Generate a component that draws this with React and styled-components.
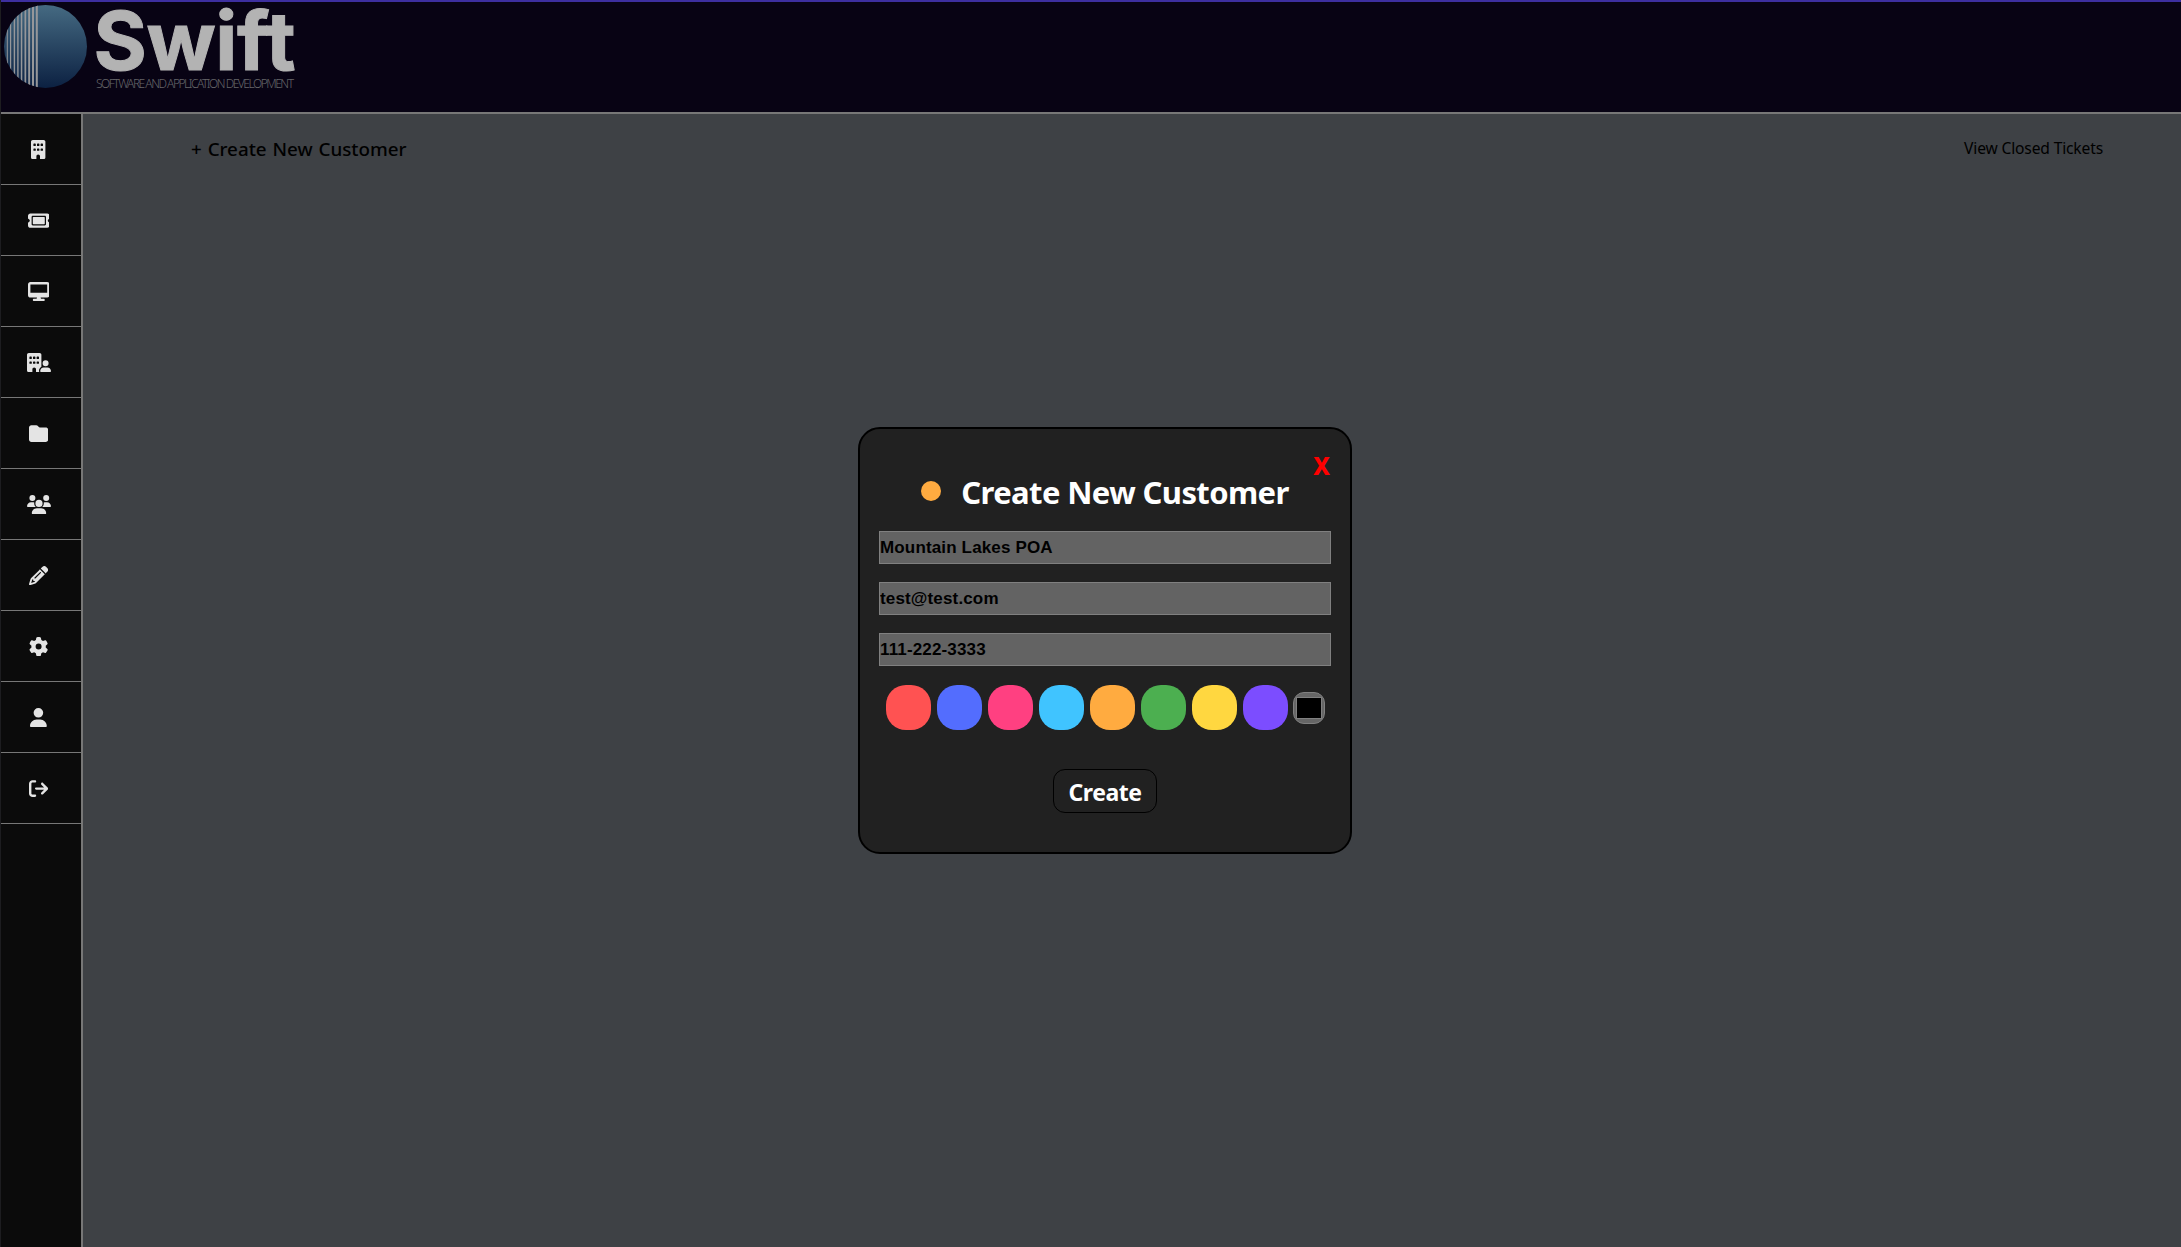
import React, { useState } from "react";
import styled, { createGlobalStyle } from "styled-components";
import {
  FaBuilding, FaTicket, FaDesktop, FaBuildingUser, FaFolder,
  FaUsers, FaPencil, FaGear, FaUser, FaArrowRightFromBracket,
} from "react-icons/fa6";

const GlobalStyle = createGlobalStyle`
  * { box-sizing: border-box; }
  body { margin: 0; background: #3e4145; font-family: "Noto Sans", "Open Sans", sans-serif; }
`;

const Page = styled.div`
  display: flex;
  flex-direction: column;
  height: 100vh;
  overflow: hidden;
  border-left: 1px solid #1d1d20;
`;

const Header = styled.header`
  height: 114px;
  flex: none;
  background: #080314;
  border-top: 2px solid #3d2fa0;
  border-bottom: 2px solid #777777;
`;

const Logo = styled.svg`
  display: block;
  width: 310px;
  height: 108px;
`;

const Body = styled.div`
  display: flex;
  flex: 1;
  min-height: 0;
`;

const Sidebar = styled.nav`
  width: 82px;
  flex: none;
  background: #0b0b0b;
  border-right: 2px solid #777777;
`;

const NavItem = styled.a`
  display: flex;
  align-items: center;
  justify-content: center;
  height: 71px;
  padding: 1px 5px 0 0;
  border-bottom: 1px solid #777777;
  color: #e4e4e4;
  font-size: 19.2px;

  svg {
    flex: none;
    width: ${(p) => p.$ratio}em;
    height: 1em;
  }
`;

const Main = styled.main`
  flex: 1;
  background: #3e4145;
`;

const Toolbar = styled.div`
  display: flex;
  justify-content: space-between;
  align-items: center;
  height: 69px;
  padding: 0 78px 0 108px;
`;

const CreateLink = styled.span`
  font-size: 18.8px;
  font-weight: 500;
  word-spacing: 1px;
  color: #000;
`;

const ClosedLink = styled.span`
  padding-bottom: 1px;
  font-size: 15.6px;
  letter-spacing: -0.15px;
  color: #000;
`;

const Overlay = styled.div`
  position: fixed;
  left: 858px;
  top: 427px;
`;

const Modal = styled.form`
  display: flex;
  flex-direction: column;
  width: 494px;
  height: 427px;
  padding: 20px 19px 0;
  background: #212121;
  border: 2px solid #000;
  border-radius: 22px;
`;

const CloseRow = styled.div`
  display: flex;
  justify-content: flex-end;
  height: 34px;
  padding-right: 1px;
`;

const Close = styled.button`
  padding: 0;
  border: 0;
  background: none;
  color: #f00;
  font: 800 24px/34px "Noto Sans", sans-serif;
`;

const TitleRow = styled.div`
  display: flex;
  align-items: center;
  justify-content: center;
  gap: 20px;
  height: 48px;
  margin-top: -15px;
`;

const Dot = styled.span`
  width: 20px;
  height: 20px;
  margin-bottom: 2px;
  border-radius: 50%;
  background: ${(p) => p.$color};
`;

const Title = styled.h1`
  margin: 0;
  font-size: 31px;
  font-weight: 700;
  letter-spacing: -0.6px;
  line-height: 48px;
  color: #fff;
  white-space: nowrap;
`;

const Fields = styled.div`
  display: flex;
  flex-direction: column;
  gap: 18px;
  margin-top: 15px;
`;

const Field = styled.input`
  height: 33px;
  padding: 0;
  border: 1px solid #808080;
  border-radius: 0;
  outline: 0;
  background: #636363;
  color: #000;
  font: bold 17px "Liberation Sans", Arial, sans-serif;
  letter-spacing: 0.15px;
`;

const Swatches = styled.div`
  display: flex;
  align-items: center;
  gap: 6px;
  margin-top: 19px;
  padding-left: 7px;
`;

const Swatch = styled.button`
  width: 45px;
  height: 45px;
  padding: 0;
  border: 0;
  border-radius: 20px;
  background: ${(p) => p.$color};
`;

const CustomColor = styled.span`
  display: flex;
  align-items: center;
  justify-content: center;
  width: 32px;
  height: 32px;
  margin: 1px 0 0 -1px;
  border: 1px solid #808080;
  border-radius: 11px;
  background: #666666;
`;

const CustomWell = styled.span`
  width: 26px;
  height: 22px;
  border: 1px solid #808080;
  background: #000;
`;

const Submit = styled.button`
  align-self: center;
  width: 104px;
  height: 44px;
  margin-top: 39px;
  padding: 1px 0 0;
  border: 1px solid #000;
  border-radius: 12px;
  background: #212121;
  color: #fff;
  font: bold 23px/42px "Noto Sans", sans-serif;
  letter-spacing: -0.5px;
`;

const NAV = [
  [FaBuilding, 0.75], [FaTicket, 1.125], [FaDesktop, 1.125], [FaBuildingUser, 1.25], [FaFolder, 1],
  [FaUsers, 1.25], [FaPencil, 1], [FaGear, 1], [FaUser, 0.875], [FaArrowRightFromBracket, 1],
];

const COLORS = ["#ff5252", "#536dfe", "#ff4081", "#40c4ff", "#ffab40", "#4caf50", "#ffd740", "#7c4dff"];

const STRIPES = [[6.8, 1], [10, 1.2], [13.7, 1.4], [17.2, 1.4], [20.8, 1.5], [24.5, 1.7], [28.2, 1.9], [32, 2], [35.8, 2]];

function SwiftLogo() {
  return (
    <Logo viewBox="1 2 310 108">
      <defs>
        <linearGradient id="globe" x1="0" y1="0" x2="0" y2="1">
          <stop offset="0" stopColor="#456a82" />
          <stop offset="1" stopColor="#0c2142" />
        </linearGradient>
        <clipPath id="disc"><circle cx="45.5" cy="46.4" r="41.5" /></clipPath>
      </defs>
      <circle cx="45.5" cy="46.4" r="41.5" fill="url(#globe)" />
      <g clipPath="url(#disc)" fill="#96979a">
        {STRIPES.map(([x, w]) => <rect key={x} x={x} y="4" width={w} height="86" />)}
      </g>
      <text x="93.5" y="69.5" fontFamily="Inter" fontWeight="700" fontSize="81.5" fill="#b3b3b3" stroke="#b3b3b3" strokeWidth="1" textLength="202">Swift</text>
      <text x="96" y="87.5" fontFamily="Noto Sans" fontWeight="300" fontSize="12" fill="#66666a" textLength="198">SOFTWARE AND APPLICATION DEVELOPMENT</text>
    </Logo>
  );
}

export default function App() {
  const [color, setColor] = useState("#ffab40");
  return (
    <>
      <GlobalStyle />
      <Page>
        <Header><SwiftLogo /></Header>
        <Body>
          <Sidebar>
            {NAV.map(([Icon, ratio], i) => <NavItem key={i} $ratio={ratio}><Icon /></NavItem>)}
          </Sidebar>
          <Main>
            <Toolbar>
              <CreateLink>+ Create New Customer</CreateLink>
              <ClosedLink>View Closed Tickets</ClosedLink>
            </Toolbar>
          </Main>
        </Body>
      </Page>
      <Overlay>
        <Modal onSubmit={(e) => e.preventDefault()}>
          <CloseRow><Close type="button">X</Close></CloseRow>
          <TitleRow>
            <Dot $color={color} />
            <Title>Create New Customer</Title>
          </TitleRow>
          <Fields>
            <Field defaultValue="Mountain Lakes POA" />
            <Field defaultValue="test@test.com" />
            <Field defaultValue="111-222-3333" />
          </Fields>
          <Swatches>
            {COLORS.map((c) => <Swatch key={c} type="button" $color={c} onClick={() => setColor(c)} />)}
            <CustomColor><CustomWell /></CustomColor>
          </Swatches>
          <Submit>Create</Submit>
        </Modal>
      </Overlay>
    </>
  );
}
